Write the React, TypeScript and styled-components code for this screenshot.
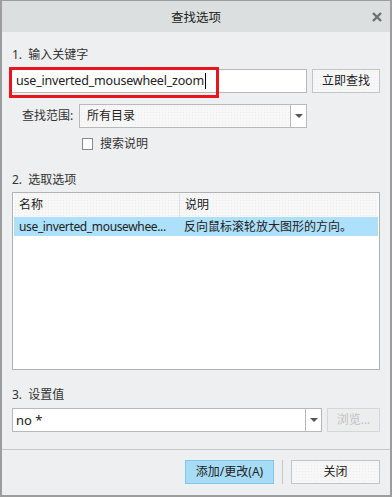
import React from "react";
import styled, { createGlobalStyle } from "styled-components";

const GlobalStyle = createGlobalStyle`
  html, body {
    margin: 0;
    padding: 0;
    background: #eeeff0;
  }
  body {
    font-family: "Noto Sans", "Noto Sans CJK SC", sans-serif;
    font-size: 12px;
    color: #333333;
  }
`;

const dots = `
  background-color: #f7f7f7;
  background-image: radial-gradient(#ececec 0.6px, transparent 0.7px);
  background-size: 3px 3px;
`;

const Window = styled.div`
  width: 392px;
  height: 497px;
  box-sizing: border-box;
  border: 2px solid #9d9d9d;
  border-top-width: 1px;
  background: #eeeff0;
  display: flex;
  flex-direction: column;
`;

const TitleBar = styled.div`
  height: 31px;
  flex: none;
  background: #dcdfdf;
  display: grid;
  grid-template-columns: 1fr auto 1fr;
  align-items: center;
  color: #222;
  font-size: 12.5px;
`;

const Title = styled.div`
  grid-column: 2;
`;

const CloseX = styled.div`
  grid-column: 3;
  justify-self: end;
  margin-right: 8px;
  display: flex;
`;

const Content = styled.div`
  padding: 0 10px;
  display: flex;
  flex-direction: column;
`;

const SectionLabel = styled.div<{ $top: number }>`
  margin-top: ${(p) => p.$top}px;
  height: 16px;
  line-height: 16px;
  font-size: 12px;
  color: #333;
`;

const Row = styled.div<{ $top: number; $h: number; $indent?: number }>`
  margin-top: ${(p) => p.$top}px;
  margin-left: ${(p) => p.$indent ?? 0}px;
  height: ${(p) => p.$h}px;
  line-height: ${(p) => p.$h}px;
  display: flex;
  align-items: center;
  position: relative;
`;

const TextInput = styled.div`
  box-sizing: border-box;
  width: 297px;
  height: 24px;
  margin-left: -1px;
  background: #fff;
  border: 1px solid #b9b9b9;
  display: flex;
  align-items: center;
  padding-left: 4px;
  font-size: 12.5px;
  letter-spacing: -0.2px;
  color: #222;
`;

const Caret = styled.span`
  display: inline-block;
  width: 1px;
  height: 16px;
  background: #000;
  margin-left: 1px;
`;

const Highlight = styled.div`
  position: absolute;
  left: -3px;
  top: -2px;
  width: 210px;
  height: 31px;
  box-sizing: border-box;
  border: 3px solid #e8141e;
  pointer-events: none;
`;

const Button = styled.div<{ $w: number; $primary?: boolean; $disabled?: boolean }>`
  box-sizing: border-box;
  width: ${(p) => p.$w}px;
  height: 24px;
  line-height: 22px;
  display: flex;
  align-items: center;
  justify-content: center;
  font-size: 12px;
  color: ${(p) => (p.$disabled ? "#c2c2c2" : "#222")};
  border: 1px solid
    ${(p) => (p.$primary ? "#7ec8ee" : p.$disabled ? "#d6d6d6" : "#c4c4c4")};
  ${(p) => (p.$primary ? "background: #a7dcf7;" : p.$disabled ? "background: #eceded;" : dots)}
`;

const Select = styled.div<{ $w: number; $dotted?: boolean }>`
  box-sizing: border-box;
  width: ${(p) => p.$w}px;
  height: 24px;
  line-height: 22px;
  border: 1px solid #b9b9b9;
  display: flex;
  ${(p) => (p.$dotted ? dots : "background: #fff;")}
`;

const SelectValue = styled.div<{ $latin?: boolean }>`
  flex: 1;
  display: flex;
  align-items: center;
  padding-left: ${(p) => (p.$latin ? 3 : 7)}px;
  font-size: ${(p) => (p.$latin ? 13 : 12)}px;
  color: #222;
`;

const SelectArrow = styled.div`
  width: 15px;
  border-left: 1px solid #b9b9b9;
  display: flex;
  align-items: center;
  justify-content: center;
  background: #fff;
  &::after {
    content: "";
    border-left: 4px solid transparent;
    border-right: 4px solid transparent;
    border-top: 4px solid #555;
  }
`;

const FieldLabel = styled.div`
  width: 57px;
  font-size: 12px;
  color: #333;
`;

const Checkbox = styled.div`
  box-sizing: border-box;
  width: 11px;
  height: 12px;
  border: 1px solid #8a8a8a;
  background: #fff;
  margin-right: 7px;
`;

const ListBox = styled.div`
  box-sizing: border-box;
  width: 368px;
  height: 178px;
  margin-top: 4px;
  border: 1px solid #b2b2b2;
  background: #fff;
  padding: 0 1px;
`;

const ListRow = styled.div<{ $header?: boolean; $selected?: boolean }>`
  display: grid;
  grid-template-columns: 165px 1fr;
  height: ${(p) => (p.$header ? 24 : 19)}px;
  line-height: ${(p) => (p.$header ? 24 : 19)}px;
  align-items: center;
  ${(p) => (p.$header ? dots : "")}
  ${(p) => (p.$selected ? "background: #ade0fa;" : "")}
`;

const Cell = styled.div<{ $divider?: boolean; $latin?: boolean }>`
  height: 100%;
  display: flex;
  align-items: center;
  padding-left: 5px;
  white-space: nowrap;
  overflow: hidden;
  font-size: 12px;
  letter-spacing: ${(p) => (p.$latin ? "-0.35px" : "0")};
  color: #222;
  ${(p) => (p.$divider ? "border-left: 1px solid #e0e0e0;" : "")}
`;

const Divider = styled.div`
  margin-top: 17px;
  height: 1px;
  background: #c6c6c6;
`;

const Footer = styled.div`
  margin-top: 10px;
  padding-right: 10px;
  display: flex;
  justify-content: flex-end;
  align-items: center;
  gap: 8px;
`;

const FooterSep = styled.div`
  width: 1px;
  height: 24px;
  background: #c6c6c6;
`;

export default function App() {
  return (
    <>
      <GlobalStyle />
      <Window>
        <TitleBar>
          <Title>查找选项</Title>
          <CloseX>
            <svg width="10" height="10" viewBox="0 0 10 10">
              <path d="M1 1L9 9M9 1L1 9" stroke="#707070" strokeWidth="2.4" />
            </svg>
          </CloseX>
        </TitleBar>
        <Content>
          <SectionLabel $top={15}>1.&nbsp; 输入关键字</SectionLabel>
          <Row $top={6} $h={24}>
            <TextInput>
              use_inverted_mousewheel_zoom
              <Caret />
            </TextInput>
            <Highlight />
            <Button $w={68} style={{ marginLeft: 5 }}>
              立即查找
            </Button>
          </Row>
          <Row $top={11} $h={24} $indent={10}>
            <FieldLabel>查找范围:</FieldLabel>
            <Select $w={228} $dotted>
              <SelectValue>所有目录</SelectValue>
              <SelectArrow />
            </Select>
          </Row>
          <Row $top={10} $h={12} $indent={70}>
            <Checkbox />
            <span>搜索说明</span>
          </Row>
          <SectionLabel $top={22}>2.&nbsp; 选取选项</SectionLabel>
          <ListBox>
            <ListRow $header>
              <Cell>名称</Cell>
              <Cell $divider>说明</Cell>
            </ListRow>
            <ListRow $selected>
              <Cell $latin>use_inverted_mousewhee...</Cell>
              <Cell>反向鼠标滚轮放大图形的方向。</Cell>
            </ListRow>
          </ListBox>
          <SectionLabel $top={17}>3.&nbsp; 设置值</SectionLabel>
          <Row $top={5} $h={24}>
            <Select $w={310}>
              <SelectValue $latin>no *</SelectValue>
              <SelectArrow />
            </Select>
            <Button $w={53} $disabled style={{ marginLeft: 5 }}>
              浏览...
            </Button>
          </Row>
        </Content>
        <Divider />
        <Footer>
          <Button $w={89} $primary>
            添加/更改(A)
          </Button>
          <FooterSep />
          <Button $w={89}>关闭</Button>
        </Footer>
      </Window>
    </>
  );
}
